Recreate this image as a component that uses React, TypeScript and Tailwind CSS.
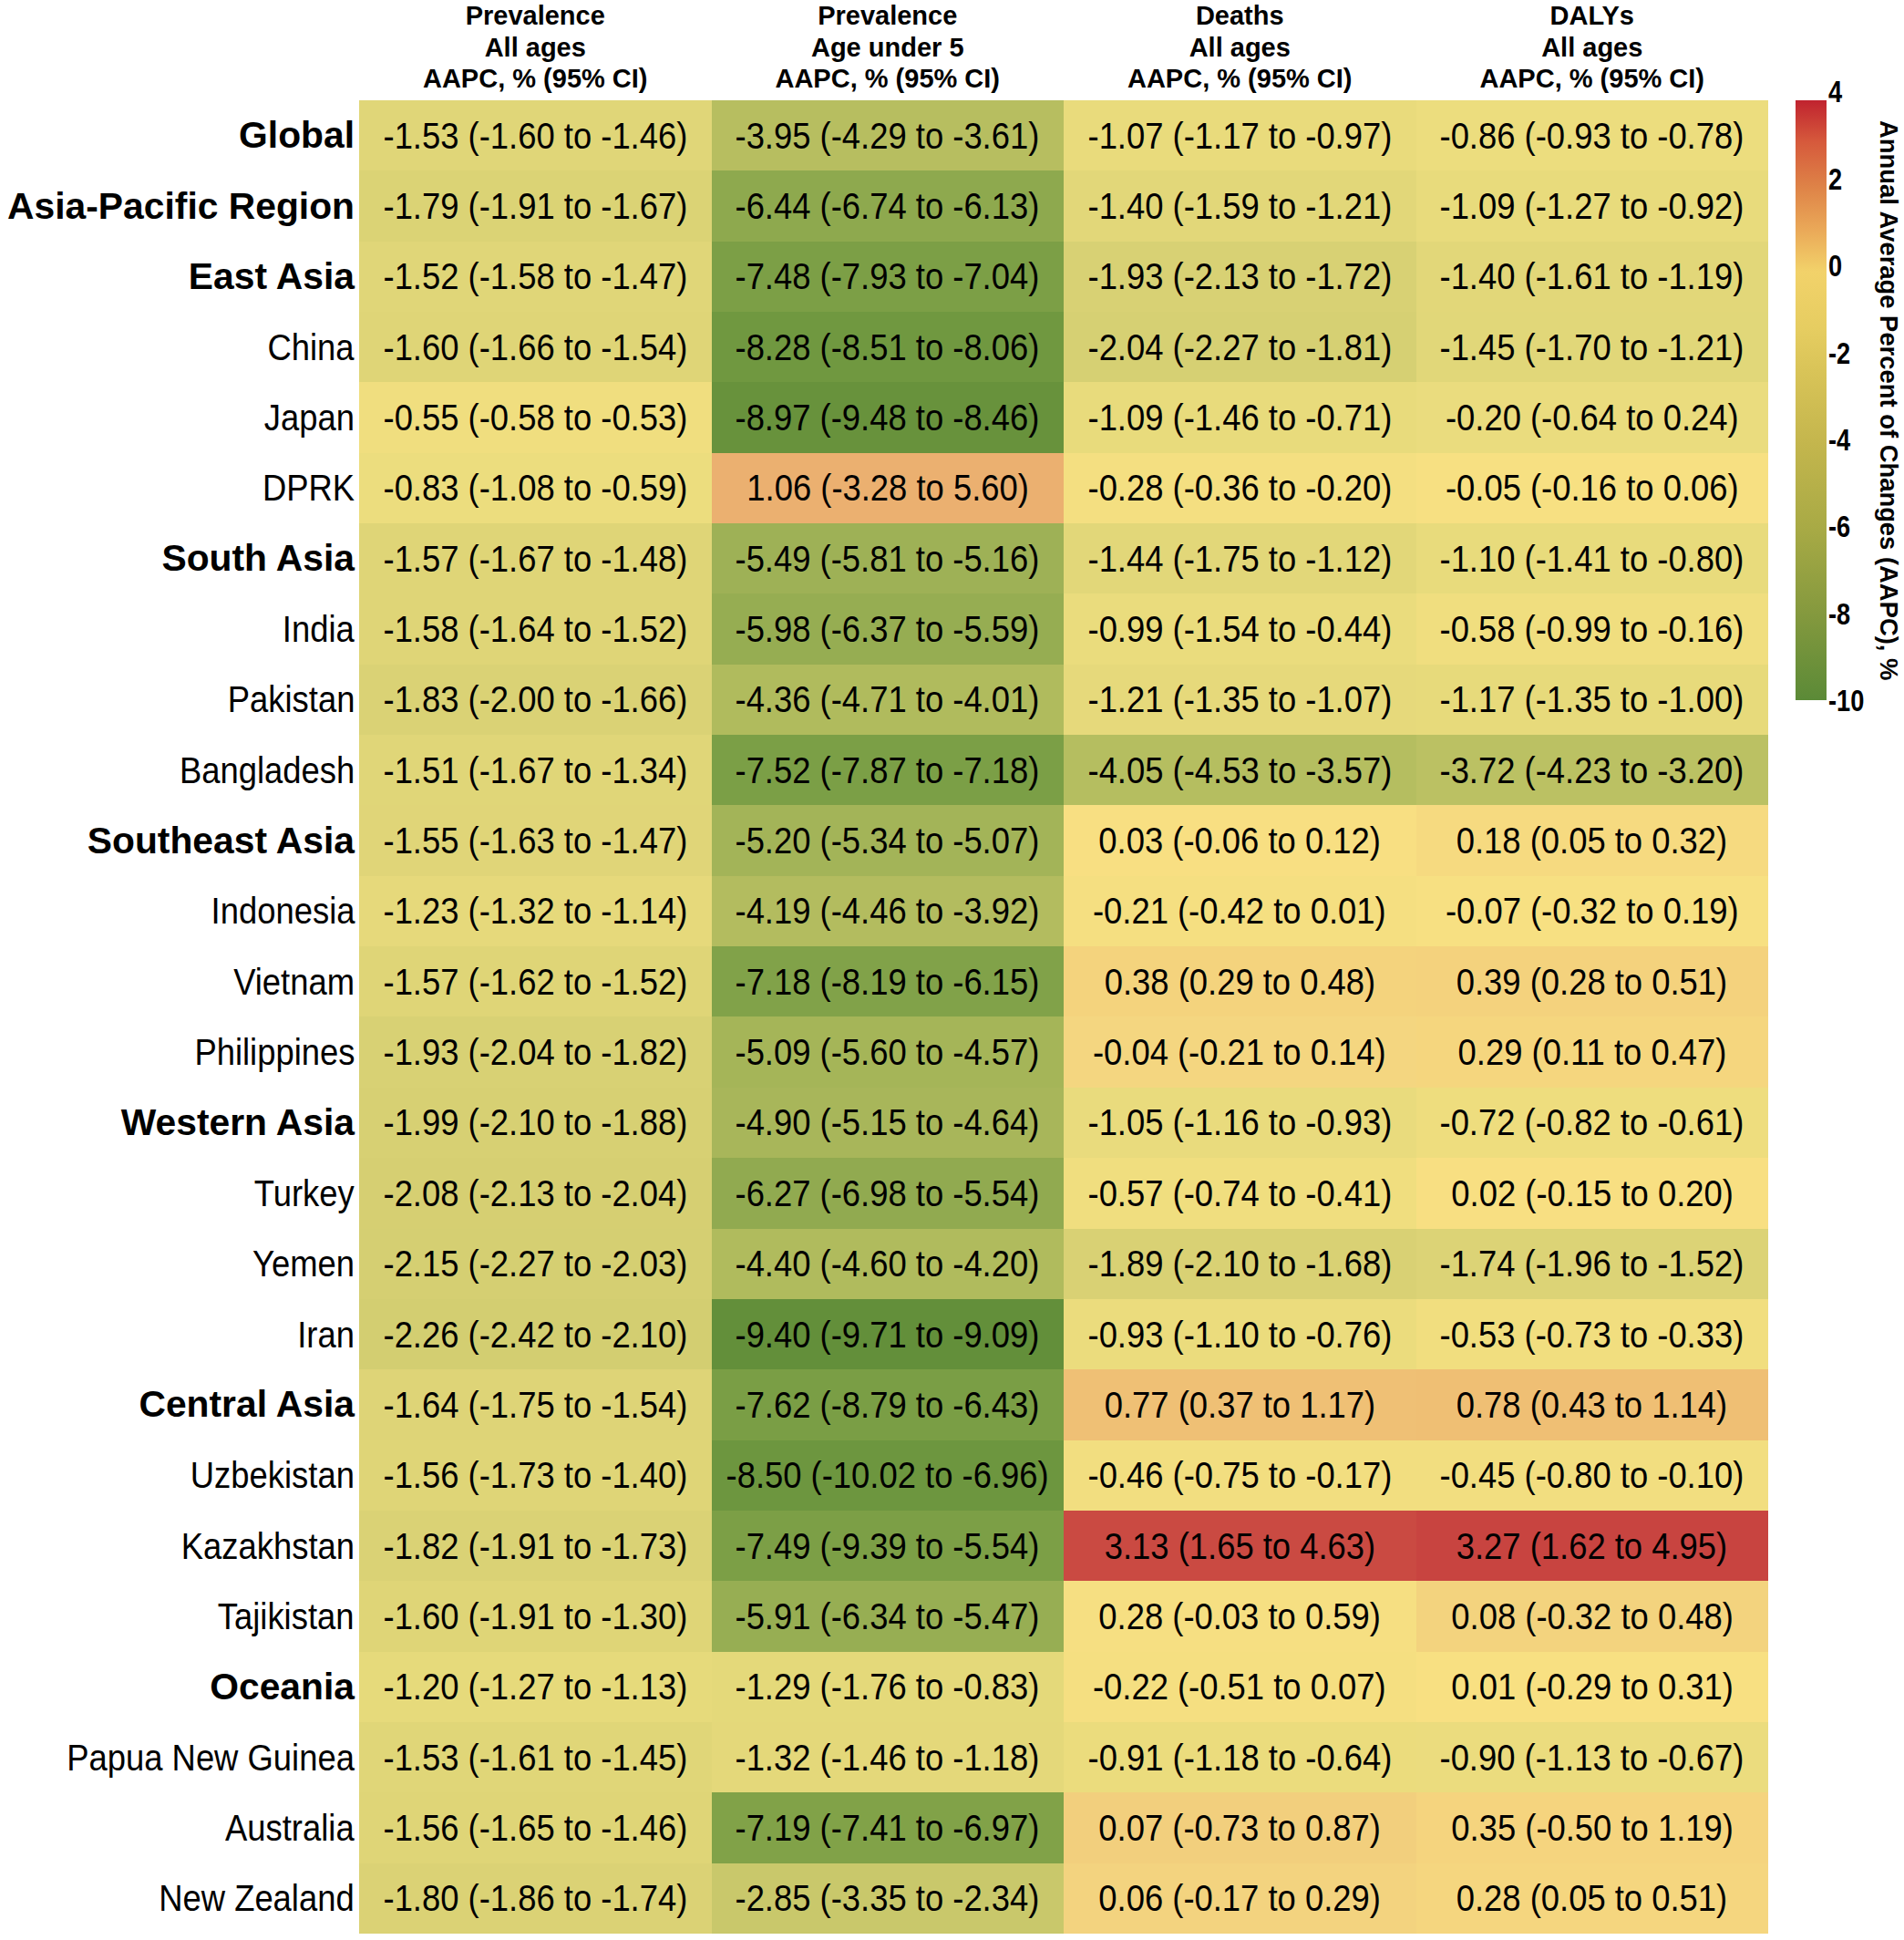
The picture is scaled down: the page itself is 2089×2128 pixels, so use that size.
import React from "react";

type Row = { name: string; bold?: boolean; cells: [string, string, string, string] };

const rows: Row[] = [
  { name: "Global", bold: true, cells: ["-1.53 (-1.60 to -1.46)", "-3.95 (-4.29 to -3.61)", "-1.07 (-1.17 to -0.97)", "-0.86 (-0.93 to -0.78)"] },
  { name: "Asia-Pacific Region", bold: true, cells: ["-1.79 (-1.91 to -1.67)", "-6.44 (-6.74 to -6.13)", "-1.40 (-1.59 to -1.21)", "-1.09 (-1.27 to -0.92)"] },
  { name: "East Asia", bold: true, cells: ["-1.52 (-1.58 to -1.47)", "-7.48 (-7.93 to -7.04)", "-1.93 (-2.13 to -1.72)", "-1.40 (-1.61 to -1.19)"] },
  { name: "China", cells: ["-1.60 (-1.66 to -1.54)", "-8.28 (-8.51 to -8.06)", "-2.04 (-2.27 to -1.81)", "-1.45 (-1.70 to -1.21)"] },
  { name: "Japan", cells: ["-0.55 (-0.58 to -0.53)", "-8.97 (-9.48 to -8.46)", "-1.09 (-1.46 to -0.71)", "-0.20 (-0.64 to 0.24)"] },
  { name: "DPRK", cells: ["-0.83 (-1.08 to -0.59)", "1.06 (-3.28 to 5.60)", "-0.28 (-0.36 to -0.20)", "-0.05 (-0.16 to 0.06)"] },
  { name: "South Asia", bold: true, cells: ["-1.57 (-1.67 to -1.48)", "-5.49 (-5.81 to -5.16)", "-1.44 (-1.75 to -1.12)", "-1.10 (-1.41 to -0.80)"] },
  { name: "India", cells: ["-1.58 (-1.64 to -1.52)", "-5.98 (-6.37 to -5.59)", "-0.99 (-1.54 to -0.44)", "-0.58 (-0.99 to -0.16)"] },
  { name: "Pakistan", cells: ["-1.83 (-2.00 to -1.66)", "-4.36 (-4.71 to -4.01)", "-1.21 (-1.35 to -1.07)", "-1.17 (-1.35 to -1.00)"] },
  { name: "Bangladesh", cells: ["-1.51 (-1.67 to -1.34)", "-7.52 (-7.87 to -7.18)", "-4.05 (-4.53 to -3.57)", "-3.72 (-4.23 to -3.20)"] },
  { name: "Southeast Asia", bold: true, cells: ["-1.55 (-1.63 to -1.47)", "-5.20 (-5.34 to -5.07)", "0.03 (-0.06 to 0.12)", "0.18 (0.05 to 0.32)"] },
  { name: "Indonesia", cells: ["-1.23 (-1.32 to -1.14)", "-4.19 (-4.46 to -3.92)", "-0.21 (-0.42 to 0.01)", "-0.07 (-0.32 to 0.19)"] },
  { name: "Vietnam", cells: ["-1.57 (-1.62 to -1.52)", "-7.18 (-8.19 to -6.15)", "0.38 (0.29 to 0.48)", "0.39 (0.28 to 0.51)"] },
  { name: "Philippines", cells: ["-1.93 (-2.04 to -1.82)", "-5.09 (-5.60 to -4.57)", "-0.04 (-0.21 to 0.14)", "0.29 (0.11 to 0.47)"] },
  { name: "Western Asia", bold: true, cells: ["-1.99 (-2.10 to -1.88)", "-4.90 (-5.15 to -4.64)", "-1.05 (-1.16 to -0.93)", "-0.72 (-0.82 to -0.61)"] },
  { name: "Turkey", cells: ["-2.08 (-2.13 to -2.04)", "-6.27 (-6.98 to -5.54)", "-0.57 (-0.74 to -0.41)", "0.02 (-0.15 to 0.20)"] },
  { name: "Yemen", cells: ["-2.15 (-2.27 to -2.03)", "-4.40 (-4.60 to -4.20)", "-1.89 (-2.10 to -1.68)", "-1.74 (-1.96 to -1.52)"] },
  { name: "Iran", cells: ["-2.26 (-2.42 to -2.10)", "-9.40 (-9.71 to -9.09)", "-0.93 (-1.10 to -0.76)", "-0.53 (-0.73 to -0.33)"] },
  { name: "Central Asia", bold: true, cells: ["-1.64 (-1.75 to -1.54)", "-7.62 (-8.79 to -6.43)", "0.77 (0.37 to 1.17)", "0.78 (0.43 to 1.14)"] },
  { name: "Uzbekistan", cells: ["-1.56 (-1.73 to -1.40)", "-8.50 (-10.02 to -6.96)", "-0.46 (-0.75 to -0.17)", "-0.45 (-0.80 to -0.10)"] },
  { name: "Kazakhstan", cells: ["-1.82 (-1.91 to -1.73)", "-7.49 (-9.39 to -5.54)", "3.13 (1.65 to 4.63)", "3.27 (1.62 to 4.95)"] },
  { name: "Tajikistan", cells: ["-1.60 (-1.91 to -1.30)", "-5.91 (-6.34 to -5.47)", "0.28 (-0.03 to 0.59)", "0.08 (-0.32 to 0.48)"] },
  { name: "Oceania", bold: true, cells: ["-1.20 (-1.27 to -1.13)", "-1.29 (-1.76 to -0.83)", "-0.22 (-0.51 to 0.07)", "0.01 (-0.29 to 0.31)"] },
  { name: "Papua New Guinea", cells: ["-1.53 (-1.61 to -1.45)", "-1.32 (-1.46 to -1.18)", "-0.91 (-1.18 to -0.64)", "-0.90 (-1.13 to -0.67)"] },
  { name: "Australia", cells: ["-1.56 (-1.65 to -1.46)", "-7.19 (-7.41 to -6.97)", "0.07 (-0.73 to 0.87)", "0.35 (-0.50 to 1.19)"] },
  { name: "New Zealand", cells: ["-1.80 (-1.86 to -1.74)", "-2.85 (-3.35 to -2.34)", "0.06 (-0.17 to 0.29)", "0.28 (0.05 to 0.51)"] },
];

type RGB = [number, number, number];
const stops: [number, RGB][] = [
  [-10, [92, 138, 54]],
  [-8, [115, 154, 66]],
  [-6, [150, 173, 82]],
  [-4, [182, 190, 96]],
  [-2, [215, 208, 115]],
  [-1, [234, 220, 125]],
  [0, [248, 224, 130]],
  [0.4, [244, 210, 125]],
  [0.8, [239, 190, 116]],
  [1.06, [235, 176, 112]],
  [2, [220, 125, 90]],
  [3.2, [201, 71, 65]],
  [4, [190, 40, 50]],
];

function colorFor(v: number): string {
  if (v <= stops[0][0]) return `rgb(${stops[0][1].join(",")})`;
  for (let i = 0; i < stops.length - 1; i++) {
    const [a, ca] = stops[i];
    const [b, cb] = stops[i + 1];
    if (v >= a && v <= b) {
      const t = (v - a) / (b - a);
      const c = ca.map((x, k) => Math.round(x + (cb[k] - x) * t));
      return `rgb(${c.join(",")})`;
    }
  }
  const last = stops[stops.length - 1][1];
  return `rgb(${last.join(",")})`;
}

const overrides: Record<string, string> = {
  "24-2": "#f2cf7d",
  "25-2": "#f3d37f",
  "21-3": "#f3d37e",
  "21-2": "#f6df82",
  "13-2": "#f4d680",
  "4-3": "#eadc7e",
};

const headers = [
  ["Prevalence", "All ages", "AAPC, % (95% CI)"],
  ["Prevalence", "Age under 5", "AAPC, % (95% CI)"],
  ["Deaths", "All ages", "AAPC, % (95% CI)"],
  ["DALYs", "All ages", "AAPC, % (95% CI)"],
];

const ticks = [
  { label: "4", cls: "top-[-9.6px]" },
  { label: "2", cls: "top-[85.8px]" },
  { label: "0", cls: "top-[181.2px]" },
  { label: "-2", cls: "top-[276.6px]" },
  { label: "-4", cls: "top-[372px]" },
  { label: "-6", cls: "top-[467.4px]" },
  { label: "-8", cls: "top-[562.8px]" },
  { label: "-10", cls: "top-[658.2px]" },
];

export default function App() {
  return (
    <div className="w-[2089px] h-[2128px] bg-white text-black font-['Liberation_Sans',Arial,sans-serif] flex flex-row overflow-hidden">
      <div className="w-[1940px] flex flex-col">
        <div className="grid grid-cols-[394px_repeat(4,386.5px)] h-[110px]">
          <div />
          {headers.map((h, i) => (
            <div key={i} className="flex flex-col items-center text-[29px] font-bold leading-[34.6px] text-center">
              {h.map((line, j) => (
                <div key={j}>{line}</div>
              ))}
            </div>
          ))}
        </div>
        {rows.map((r, ri) => (
          <div key={ri} className="grid grid-cols-[394px_repeat(4,386.5px)] h-[77.35px]">
            <div className="flex items-center justify-end pr-[5px] whitespace-nowrap">
              {r.bold ? (
                <span className="text-[40.8px] font-bold leading-none">{r.name}</span>
              ) : (
                <span className="inline-block text-[40px] leading-none scale-x-[0.91] origin-right">{r.name}</span>
              )}
            </div>
            {r.cells.map((c, ci) => {
              const v = parseFloat(c.split(" ")[0]);
              const bg = overrides[`${ri}-${ci}`] ?? colorFor(v);
              return (
                <div
                  key={ci}
                  className="flex items-center justify-center whitespace-nowrap"
                  style={{ backgroundColor: bg }}
                >
                  <span className="inline-block text-[40px] leading-none scale-x-[0.91]">{c}</span>
                </div>
              );
            })}
          </div>
        ))}
      </div>
      <div className="flex flex-row pt-[110px] pl-[30px]">
        <div className="w-[34px] h-[658px] bg-[linear-gradient(to_bottom,#c0232f_0%,#d65a3c_7%,#de8247_14.3%,#eaa858_21.5%,#f2d26a_28.6%,#e6cd61_38%,#d9c458_45%,#c4b64d_57.1%,#a8aa45_71.4%,#84993e_85.7%,#5b8a37_100%)]" />
        <div className="relative w-[56px] h-[658px]">
          {ticks.map((t) => (
            <div
              key={t.label}
              className={`absolute left-[2px] -translate-y-1/2 text-[34px] font-bold leading-none scale-x-[0.8] origin-left ${t.cls}`}
            >
              {t.label}
            </div>
          ))}
        </div>
        <div className="w-[24px] h-[658px] flex items-center justify-center">
          <div className="[writing-mode:vertical-rl] text-[27.4px] font-bold leading-[24px] whitespace-nowrap">
            Annual Average Percent of Changes (AAPC), %
          </div>
        </div>
      </div>
    </div>
  );
}
